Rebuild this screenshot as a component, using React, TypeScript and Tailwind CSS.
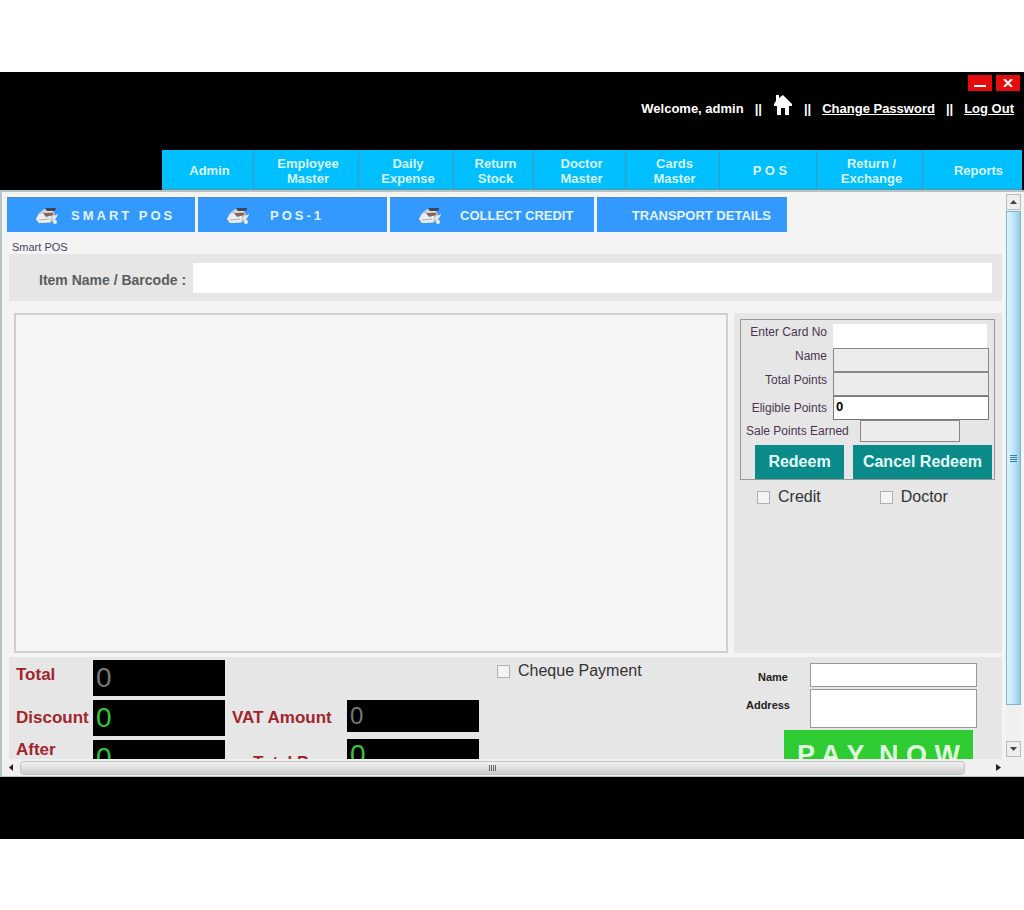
import React from 'react';

const menuItems = [
    { lines: ['Admin'] },
    { lines: ['Employee', 'Master'] },
    { lines: ['Daily', 'Expense'] },
    { lines: ['Return', 'Stock'] },
    { lines: ['Doctor', 'Master'] },
    { lines: ['Cards', 'Master'] },
    { lines: ['P O S'] },
    { lines: ['Return /', 'Exchange'] },
    { lines: ['Reports'] },
];

function RegisterIcon() {
    return (
        <svg width="24" height="18" viewBox="0 0 24 18" className="shrink-0" aria-hidden="true">
            <path d="M1 12 L4 6 L9 2 L18 3 L20 8 L21 13 L14 16 L4 16 Z" fill="#c3c8ce" />
            <path d="M1 12 L4 7 L9 6 L16 9 L15 15 L4 16 Z" fill="#eceef0" />
            <path d="M10 1 L21 1 L20 4 L12 4 Z" fill="#3c4757" />
            <path d="M8 6 L18 5 L18 8 L11 10 Z" fill="#8a6358" />
            <path d="M9 5 L18 5" stroke="#f5f5f5" strokeWidth="1" />
            <path d="M17 10 L23 7 L22 10 L18 13 Z" fill="#e6e9ec" />
            <path d="M4 13 L14 12" stroke="#aab0b8" strokeWidth="1" />
            <circle cx="20" cy="15" r="2" fill="#e8f2fb" />
        </svg>
    );
}

function HomeIcon() {
    return (
        <svg width="20" height="22" viewBox="0 0 20 22" fill="white" aria-hidden="true">
            <path d="M3 1 H6 V4 L10 1 L19 10 V12 H16 V21 H12 V14 H8 V21 H4 V12 H1 V10 L3 7 Z" />
        </svg>
    );
}

function CheckField({ id, label }: { id: string; label: string }) {
    return (
        <div className="flex items-center gap-2">
            <input id={id} type="checkbox" className="size-[13px] appearance-none border border-[#b0b0b0] bg-[#f4f4f4] checked:bg-[#3399ff]" />
            <label htmlFor={id} className="text-base leading-5 text-[#333]">{label}</label>
        </div>
    );
}

function Header() {
    return (
        <header className="h-[78px] text-white">
            <div className="flex justify-end gap-1 pt-[3px] pr-1">
                <button aria-label="Minimize" className="flex h-4 w-6 items-end justify-center bg-[#e60c0c] pb-1">
                    <span className="h-[2px] w-3 bg-white" />
                </button>
                <button aria-label="Close" className="flex h-4 w-6 items-center justify-center bg-[#e60c0c]">
                    <svg width="10" height="8" viewBox="0 0 10 8" stroke="white" strokeWidth="2">
                        <path d="M1 0 L9 8 M9 0 L1 8" />
                    </svg>
                </button>
            </div>
            <div className="flex h-9 items-center justify-end gap-[11px] pr-[10px] text-[13px] font-bold">
                <span>Welcome, admin</span>
                <span>||</span>
                <a href="#home" aria-label="Home" className="pb-2"><HomeIcon /></a>
                <span>||</span>
                <a href="#password" className="underline">Change Password</a>
                <span>||</span>
                <a href="#logout" className="underline">Log Out</a>
            </div>
        </header>
    );
}

function MainMenu() {
    return (
        <nav className="mr-[2px] ml-[162px] grid h-10 grid-cols-[92fr_105fr_95fr_80fr_92fr_94fr_97fr_106fr_99fr] border-b border-[#5f93a0] bg-[#00bfff]">
            {menuItems.map((item, i) => (
                <button key={i} className="border-r border-[#4a93b0] pt-[2px] pl-1 text-[13px] leading-[15px] font-bold text-[#d8f6ff] last:border-r-0 last:pl-3">
                    {item.lines.map((line) => (
                        <span key={line} className="block">{line}</span>
                    ))}
                </button>
            ))}
        </nav>
    );
}

function Tabs() {
    const tab = 'flex items-center bg-[#3399ff] text-[13px] font-bold text-[#e2f4ff] border-t border-[#5588c0] pt-px';
    return (
        <div className="grid h-[35px] grid-cols-[188fr_189fr_204fr_190fr_216fr] gap-[3px] pl-[5px]">
            <button className={`${tab} gap-3 pl-7`}>
                <RegisterIcon />
                <span className="tracking-[3px]">SMART POS</span>
            </button>
            <button className={`${tab} gap-5 pl-7`}>
                <RegisterIcon />
                <span className="tracking-[3px]">POS-1</span>
            </button>
            <button className={`${tab} gap-[18px] pl-7`}>
                <RegisterIcon />
                <span>COLLECT CREDIT</span>
            </button>
            <button className={`${tab} justify-end pr-4`}>TRANSPORT DETAILS</button>
        </div>
    );
}

function LoyaltyCard() {
    const label = 'w-[86px] text-right text-xs leading-4 text-[#4b3550]';
    const field = 'h-6 w-[156px] border border-[#888] bg-[#ececec] px-1 text-[13px] font-bold';
    return (
        <div className="border border-[#999] pt-1">
            <div className="flex items-start gap-[6px]">
                <label htmlFor="card" className={label}>Enter Card No</label>
                <input id="card" className="h-6 w-[154px] bg-white px-1 text-[13px]" />
            </div>
            <div className="flex items-start gap-[6px]">
                <label htmlFor="holder" className={label}>Name</label>
                <input id="holder" readOnly className={field} />
            </div>
            <div className="flex items-start gap-[6px]">
                <label htmlFor="points" className={label}>Total Points</label>
                <input id="points" readOnly className={field} />
            </div>
            <div className="flex items-center gap-[6px]">
                <label htmlFor="eligible" className={label}>Eligible Points</label>
                <input id="eligible" defaultValue="0" className="h-6 w-[156px] border border-[#777] bg-white px-[2px] pb-1 text-[13px] font-bold" />
            </div>
            <div className="flex items-center gap-[7px] pl-[5px]">
                <label htmlFor="earned" className="w-[107px] text-xs leading-4 whitespace-nowrap text-[#4b3550]">Sale Points Earned</label>
                <input id="earned" readOnly className="h-[22px] w-[100px] border border-[#888] bg-[#ececec]" />
            </div>
            <div className="flex gap-[9px] pt-[3px] pl-[14px]">
                <button className="h-[34px] w-[89px] bg-[#0a8a88] text-base font-bold text-[#e4ffff]">Redeem</button>
                <button className="h-[34px] w-[139px] bg-[#0a8a88] text-base font-bold text-[#e4ffff]">Cancel Redeem</button>
            </div>
        </div>
    );
}

function Totals() {
    const label = 'text-[17px] leading-5 font-bold text-[#a3252c]';
    const box = 'w-[132px] bg-black px-[3px] leading-8';
    return (
        <div className="flex h-[102px] overflow-hidden bg-[#e6e6e6]">
            <div className="grid shrink-0 auto-rows-[36px] grid-cols-[84px_132px] gap-y-1 pt-[3px]">
                <label htmlFor="total" className={`${label} pt-[5px] pl-[7px]`}>Total</label>
                <input id="total" readOnly defaultValue="0" className={`${box} text-[28px] text-[#777]`} />
                <label htmlFor="discount" className={`${label} pt-2 pl-[7px]`}>Discount</label>
                <input id="discount" defaultValue="0" className={`${box} text-[28px] text-[#35c43c]`} />
                <label htmlFor="after" className={`${label} pl-[7px] whitespace-nowrap`}>After<br />Discount</label>
                <input id="after" defaultValue="0" className={`${box} text-[28px] text-[#35c43c]`} />
            </div>
            <div className="grid shrink-0 auto-rows-[32px] grid-cols-[122px_132px] gap-y-[7px] pt-[43px]">
                <label htmlFor="vat" className={`${label} pt-2 pl-[7px]`}>VAT Amount</label>
                <input id="vat" readOnly defaultValue="0" className={`${box} text-2xl text-[#777]`} />
                <label htmlFor="pay" className={`${label} pt-[14px] pl-7 whitespace-nowrap`}>Total Pay</label>
                <input id="pay" defaultValue="0" className={`${box} text-[28px] text-[#35c43c]`} />
            </div>
            <div className="flex-1 pt-1 pl-[18px]">
                <CheckField id="cheque" label="Cheque Payment" />
            </div>
            <div className="w-[260px] shrink-0 pt-[6px] pr-[25px]">
                <div className="flex justify-end gap-[22px]">
                    <label htmlFor="customer" className="pt-[6px] text-[11px] leading-4 font-bold text-[#222]">Name</label>
                    <input id="customer" className="h-[24px] w-[167px] border border-[#999] bg-white px-1 text-[13px]" />
                </div>
                <div className="flex justify-end gap-[20px] pt-[2px]">
                    <label htmlFor="address" className="pt-2 text-[11px] leading-4 font-bold text-[#222]">Address</label>
                    <textarea id="address" className="block h-[39px] w-[167px] resize-none border border-[#999] bg-white px-1 text-[13px]" />
                </div>
                <div className="flex justify-end pt-[2px] pr-1">
                    <button className="h-[50px] w-[189px] bg-[#2fcb32] text-[27px] font-bold whitespace-pre text-[#dcffdc]">P A Y  N O W</button>
                </div>
            </div>
        </div>
    );
}

function VerticalScrollbar() {
    return (
        <div className="flex w-[15px] shrink-0 flex-col bg-[#f0f0f0]">
            <button aria-label="Scroll up" className="flex h-4 items-center justify-center border border-[#bbb] bg-[#eee]">
                <svg width="7" height="4" viewBox="0 0 7 4" fill="#444"><path d="M0 4 L3.5 0 L7 4 Z" /></svg>
            </button>
            <div className="mt-px flex flex-1 flex-col items-center justify-center gap-px border border-[#7fb4cf] bg-linear-to-r from-[#e0f4fc] via-[#bfe6f8] to-[#92cbe6]">
                <span className="h-px w-[7px] bg-[#3c7fa8]" />
                <span className="h-px w-[7px] bg-[#3c7fa8]" />
                <span className="h-px w-[7px] bg-[#3c7fa8]" />
                <span className="h-px w-[7px] bg-[#3c7fa8]" />
            </div>
            <button aria-label="Scroll down" className="mt-9 mb-[2px] flex h-4 items-center justify-center border border-[#bbb] bg-[#eee]">
                <svg width="7" height="4" viewBox="0 0 7 4" fill="#444"><path d="M0 0 L3.5 4 L7 0 Z" /></svg>
            </button>
        </div>
    );
}

function HorizontalScrollbar() {
    return (
        <div className="flex h-[17px] items-center bg-[#f0f0f0] pr-[22px]">
            <button aria-label="Scroll left" className="flex w-[18px] justify-center">
                <svg width="4" height="7" viewBox="0 0 4 7" fill="#222"><path d="M4 0 L0 3.5 L4 7 Z" /></svg>
            </button>
            <div className="flex h-[14px] flex-1 items-center justify-center gap-px rounded-sm border border-[#c4c4c4] bg-linear-to-b from-[#f2f2f2] to-[#cccccc]">
                <span className="h-[6px] w-px bg-[#666]" />
                <span className="h-[6px] w-px bg-[#666]" />
                <span className="h-[6px] w-px bg-[#666]" />
                <span className="h-[6px] w-px bg-[#666]" />
            </div>
            <button aria-label="Scroll right" className="ml-[29px] flex w-2 justify-center">
                <svg width="5" height="7" viewBox="0 0 5 7" fill="#222"><path d="M0 0 L5 3.5 L0 7 Z" /></svg>
            </button>
        </div>
    );
}

export default function App() {
    return (
        <div className="min-h-screen bg-white pt-[72px] font-['Liberation_Sans',Arial,sans-serif]">
            <div className="bg-black pb-[62px]">
                <Header />
                <MainMenu />

                <div className="border-t-2 border-b border-l-2 border-[#b5c4c8] bg-[#f4f4f4]">
                    <div className="flex pt-[2px] pr-[3px]">
                        <main className="min-w-0 flex-1 pt-[3px]">
                            <Tabs />
                            <h1 className="pt-[9px] pl-[10px] text-[11px] leading-[13px] text-[#444466]">Smart POS</h1>

                            <div className="pr-1 pl-[7px]">
                                <div className="flex h-[47px] items-center bg-[#e6e6e6] pr-[10px]">
                                    <label htmlFor="item" className="w-[184px] pt-1 pl-[30px] text-sm font-bold whitespace-nowrap text-[#5c5c5c]">Item Name / Barcode :</label>
                                    <input id="item" className="h-[30px] min-w-0 flex-1 bg-white px-2 text-sm" />
                                </div>

                                <div className="flex gap-[6px] pt-3 pb-1">
                                    <section aria-label="Bill items" className="ml-[5px] h-[340px] flex-1 border-2 border-[#cfcfcf] bg-[#f5f5f5]" />
                                    <aside className="h-[340px] w-[268px] bg-[#e6e6e6] pt-[6px] pr-[7px] pl-[6px]">
                                        <LoyaltyCard />
                                        <div className="flex gap-[59px] pt-[7px] pl-[17px]">
                                            <CheckField id="credit" label="Credit" />
                                            <CheckField id="doctor" label="Doctor" />
                                        </div>
                                    </aside>
                                </div>

                                <Totals />
                            </div>
                        </main>
                        <VerticalScrollbar />
                    </div>
                    <HorizontalScrollbar />
                </div>
            </div>
        </div>
    );
}
